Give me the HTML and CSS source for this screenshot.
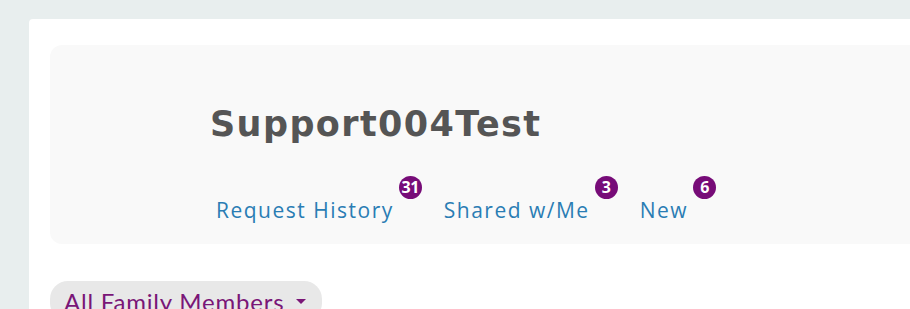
FILE: index.html
```html
<!DOCTYPE html>
<html>
<head>
<meta charset="utf-8">
<link rel="stylesheet" href="styles.css">
</head>
<body>
<div class="viewport">
  <div class="card">
    <div class="panel">
      <h1 class="title">Support004Test</h1>
      <nav class="tabs">
        <a class="tab" href="#">Request History<span class="badge">31</span></a>
        <a class="tab" href="#">Shared w/Me<span class="badge">3</span></a>
        <a class="tab" href="#">New<span class="badge">6</span></a>
      </nav>
    </div>
    <div class="filters">
      <button class="pill">All Family Members <span class="caret"></span></button>
    </div>
  </div>
</div>
</body>
</html>
```
FILE: styles.css
```css
html, body {
  margin: 0;
  padding: 0;
  background: #e8eeee;
  height: 309px;
  overflow: hidden;
}
.viewport {
  padding: 19px 0 0 29px;
  width: 910px;
  height: 309px;
  box-sizing: border-box;
  overflow: hidden;
}
.card {
  width: 1000px;
  background: #ffffff;
  border-radius: 4px;
  padding: 26px 21px 0;
  height: 400px;
  box-sizing: border-box;
}
.panel {
  background: #f9f9f9;
  border-radius: 12px;
  height: 199px;
  box-sizing: border-box;
  padding: 59px 0 0 160px;
}
.title {
  margin: 0;
  font-family: "DejaVu Sans", sans-serif;
  font-weight: bold;
  font-size: 35px;
  line-height: 40px;
  color: #555555;
  letter-spacing: 1.4px;
}
.tabs {
  display: flex;
  gap: 22px;
  margin-top: 54px;
  padding-left: 6px;
}
.tab {
  position: relative;
  font-family: "Open Sans", sans-serif;
  font-size: 21px;
  line-height: 24px;
  color: #2a7db4;
  text-decoration: none;
  letter-spacing: 1.5px;
  padding-right: 28px;
}
.badge {
  position: absolute;
  right: 0;
  top: -22px;
  width: 23px;
  height: 23px;
  border-radius: 50%;
  background: #770c78;
  color: #fff;
  font-family: "Open Sans", sans-serif;
  font-weight: bold;
  font-size: 16px;
  line-height: 23px;
  text-align: center;
  letter-spacing: -0.5px;
}
.filters {
  margin-top: 37px;
}
.pill {
  display: inline-flex;
  align-items: center;
  gap: 12px;
  background: #e8e8e8;
  border: none;
  border-radius: 18px;
  height: 40px;
  padding: 0 16px 0 14px;
  font-family: "Lato", sans-serif;
  font-size: 24px;
  letter-spacing: 0.8px;
  color: #7a1677;
}
.caret {
  width: 0;
  height: 0;
  border-left: 5px solid transparent;
  border-right: 5px solid transparent;
  border-top: 5px solid #7a1677;
}
```
